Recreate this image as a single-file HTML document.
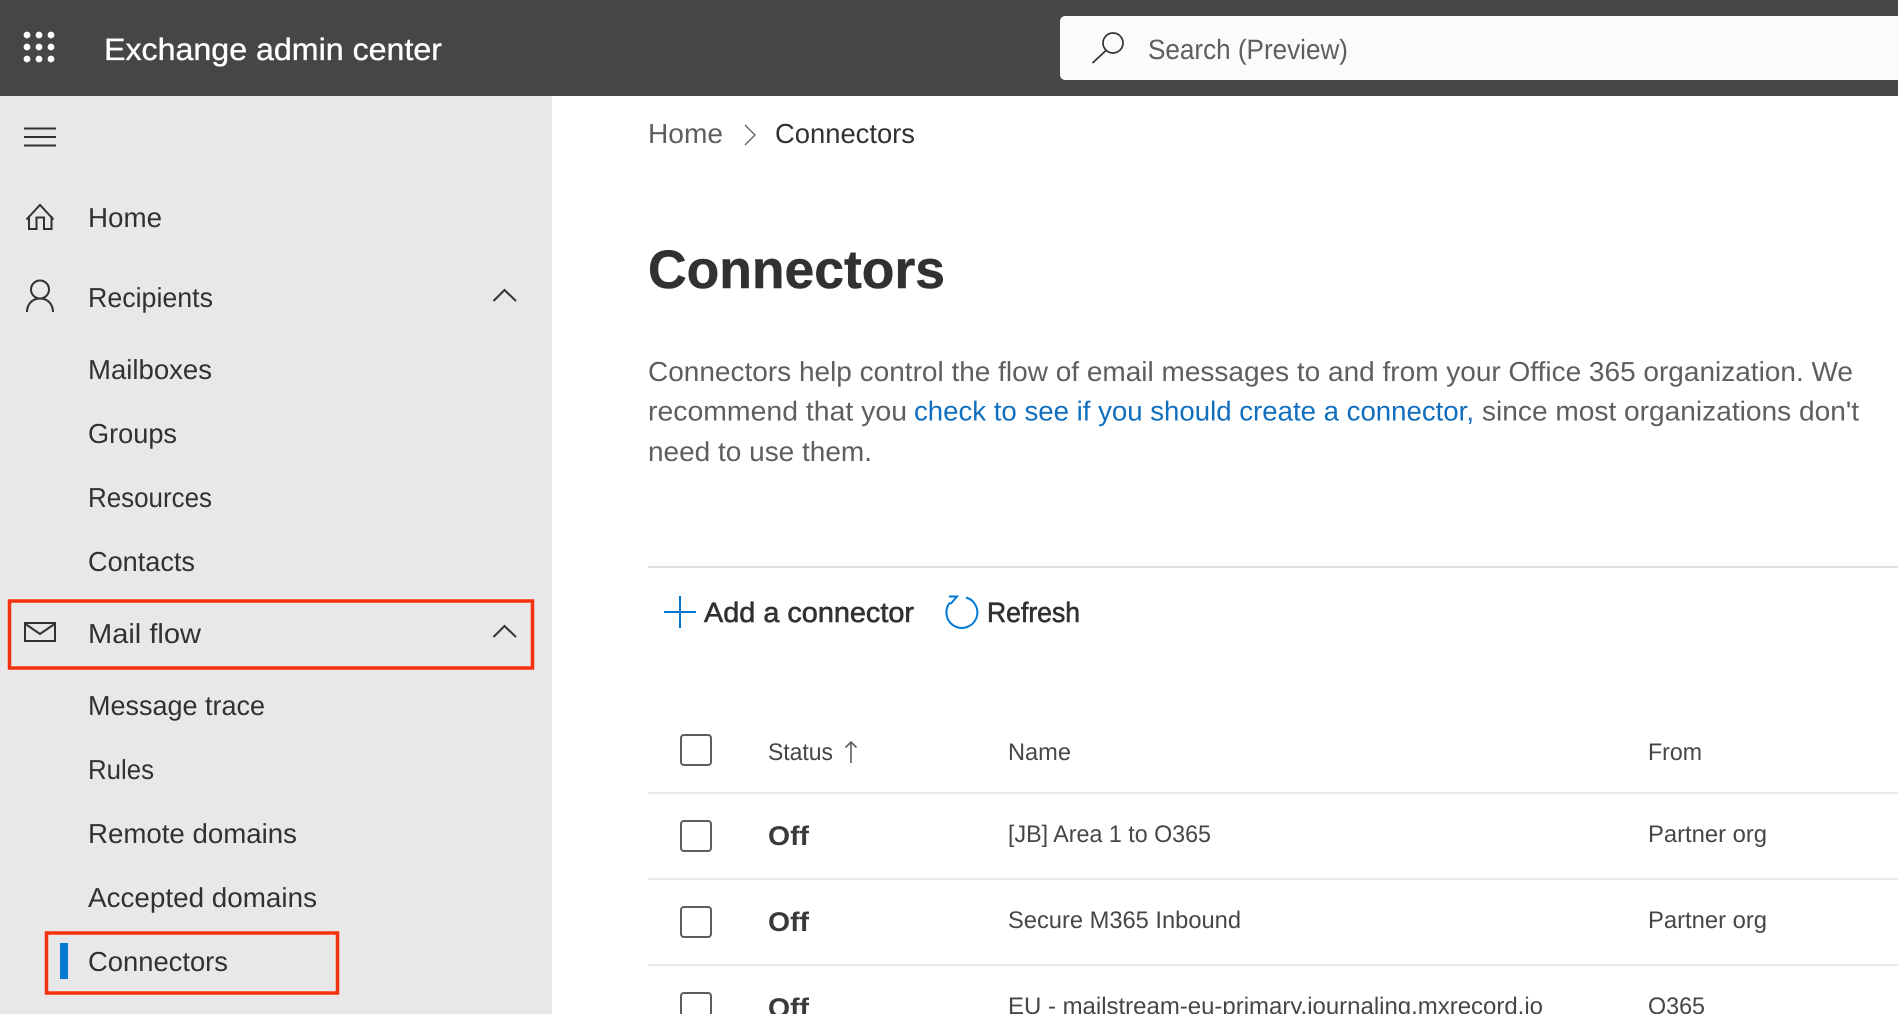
<!DOCTYPE html>
<html lang="en"><head><meta charset="utf-8"><title>Exchange admin center - Connectors</title>
<style>
html,body{margin:0;padding:0;width:1898px;height:1014px;overflow:hidden;background:#fff}
svg{display:block;font-family:"Liberation Sans",sans-serif;text-rendering:geometricPrecision}
.n{font-size:27.5px;fill:#323130}
.p{font-size:27.5px;fill:#605e5c}
.t{font-size:24px;fill:#484644}
.o{font-size:27px;font-weight:700;fill:#3b3a39}
.b{font-size:28px;fill:#323130;stroke:#323130;stroke-width:.6px}
.i{fill:none;stroke:#323130;stroke-width:2}
</style></head><body>
<svg width="1898" height="1014" viewBox="0 0 1898 1014" xmlns="http://www.w3.org/2000/svg">
<rect width="1898" height="1014" fill="#fff"/>
<rect y="96" width="552" height="918" fill="#e8e8e8"/>
<rect width="1898" height="96" fill="#484644"/>
<g fill="#fff"><circle cx="27" cy="35" r="3.400"/><circle cx="39" cy="35" r="3.400"/><circle cx="51" cy="35" r="3.400"/><circle cx="27" cy="47" r="3.400"/><circle cx="39" cy="47" r="3.400"/><circle cx="51" cy="47" r="3.400"/><circle cx="27" cy="59" r="3.400"/><circle cx="39" cy="59" r="3.400"/><circle cx="51" cy="59" r="3.400"/></g>
<text x="104" y="60" font-size="31" fill="#fff" stroke="#fff" stroke-width=".35" textLength="338" lengthAdjust="spacingAndGlyphs">Exchange admin center</text>
<path d="M1060 21a5 5 0 0 1 5-5H1898V80H1065a5 5 0 0 1-5-5Z" fill="#fbfbfb"/>
<circle cx="1113" cy="43" r="10" fill="none" stroke="#323130" stroke-width="1.700"/>
<path d="M1106 50.500L1092.500 63" fill="none" stroke="#323130" stroke-width="1.700"/>
<text x="1148" y="59" font-size="28" fill="#605e5c" textLength="200" lengthAdjust="spacingAndGlyphs">Search (Preview)</text>

<path class="i" d="M24 128.500H56M24 137H56M24 145.500H56"/>
<path class="i" d="M26.500 219.500L40 205L53.500 219.500M29 216V229H36.500V217.500H44V229H51.500V216"/>
<circle class="i" cx="40" cy="289.500" r="9"/>
<path class="i" d="M27 312C27 304 32.500 298.500 40 298.500S53 304 53 312"/>
<path class="i" d="M493.500 301L504.500 290L516 301"/>
<rect class="i" x="25" y="623" width="30" height="18"/>
<path class="i" d="M25.500 624L40 634L54.500 624"/>
<path class="i" d="M493.500 637L504.500 626L516 637"/>

<text class="n" x="88" y="227" textLength="74" lengthAdjust="spacingAndGlyphs">Home</text>
<text class="n" x="88" y="307" textLength="125" lengthAdjust="spacingAndGlyphs">Recipients</text>
<text class="n" x="88" y="379" textLength="124" lengthAdjust="spacingAndGlyphs">Mailboxes</text>
<text class="n" x="88" y="443" textLength="89" lengthAdjust="spacingAndGlyphs">Groups</text>
<text class="n" x="88" y="507" textLength="124" lengthAdjust="spacingAndGlyphs">Resources</text>
<text class="n" x="88" y="571" textLength="107" lengthAdjust="spacingAndGlyphs">Contacts</text>
<text class="n" x="88" y="643" textLength="113" lengthAdjust="spacingAndGlyphs">Mail flow</text>
<text class="n" x="88" y="715" textLength="177" lengthAdjust="spacingAndGlyphs">Message trace</text>
<text class="n" x="88" y="779" textLength="66" lengthAdjust="spacingAndGlyphs">Rules</text>
<text class="n" x="88" y="843" textLength="209" lengthAdjust="spacingAndGlyphs">Remote domains</text>
<text class="n" x="88" y="907" textLength="229" lengthAdjust="spacingAndGlyphs">Accepted domains</text>
<text class="n" x="88" y="971" textLength="140" lengthAdjust="spacingAndGlyphs">Connectors</text>

<rect x="9.500" y="601" width="523" height="67" fill="none" stroke="#f5320f" stroke-width="3.500"/>
<rect x="46.500" y="933" width="291" height="60" fill="none" stroke="#f5320f" stroke-width="3.500"/>
<rect x="60" y="943" width="8" height="36" fill="#0078d4"/>

<text class="p" x="648" y="143" textLength="75" lengthAdjust="spacingAndGlyphs">Home</text>
<path d="M745 125L755 135L745 145" fill="none" stroke="#605e5c" stroke-width="1.300"/>
<text class="n" x="775" y="143" textLength="140" lengthAdjust="spacingAndGlyphs">Connectors</text>
<text x="648" y="288" font-size="54" font-weight="700" fill="#323130" stroke="#323130" stroke-width=".5" textLength="297" lengthAdjust="spacingAndGlyphs">Connectors</text>
<text class="p" x="648" y="381" textLength="1205" lengthAdjust="spacingAndGlyphs">Connectors help control the flow of email messages to and from your Office 365 organization. We</text>
<text class="p" x="648" y="420.500" textLength="259" lengthAdjust="spacingAndGlyphs">recommend that you</text>
<text x="914" y="420.500" font-size="27.500" fill="#106ebe" textLength="560" lengthAdjust="spacingAndGlyphs">check to see if you should create a connector,</text>
<text class="p" x="1482" y="420.500" textLength="377" lengthAdjust="spacingAndGlyphs">since most organizations don't</text>
<text class="p" x="648" y="461" textLength="224" lengthAdjust="spacingAndGlyphs">need to use them.</text>
<rect x="648" y="566" width="1250" height="2" fill="#e1dfdd"/>

<path d="M664 612H696M680 596V628" fill="none" stroke="#0078d4" stroke-width="2"/>
<text class="b" x="704" y="622" textLength="210" lengthAdjust="spacingAndGlyphs">Add a connector</text>
<path d="M966 597.500A15.500 15.500 0 1 1 950 602.500" fill="none" stroke="#0078d4" stroke-width="2"/>
<path d="M949 596.500L957 596.500L950.500 604" fill="none" stroke="#0078d4" stroke-width="2"/>
<text class="b" x="987" y="622" textLength="93" lengthAdjust="spacingAndGlyphs">Refresh</text>

<rect x="681" y="735" width="30" height="30" rx="3" fill="#fff" stroke="#605e5c" stroke-width="2"/>
<text class="t" x="768" y="760" textLength="65" lengthAdjust="spacingAndGlyphs">Status</text>
<path d="M851 763V742M845.500 747.500L851 742L856.500 747.500" fill="none" stroke="#605e5c" stroke-width="1.600"/>
<text class="t" x="1008" y="760" textLength="63" lengthAdjust="spacingAndGlyphs">Name</text>
<text class="t" x="1648" y="760" textLength="54" lengthAdjust="spacingAndGlyphs">From</text>
<rect x="648" y="792" width="1250" height="2" fill="#edebe9"/>

<rect x="681" y="821" width="30" height="30" rx="3" fill="#fff" stroke="#605e5c" stroke-width="2"/>
<text class="o" x="768" y="845" textLength="41" lengthAdjust="spacingAndGlyphs">Off</text>
<text class="t" x="1008" y="842" textLength="203" lengthAdjust="spacingAndGlyphs">[JB] Area 1 to O365</text>
<text class="t" x="1648" y="842" textLength="119" lengthAdjust="spacingAndGlyphs">Partner org</text>
<rect x="648" y="878" width="1250" height="2" fill="#edebe9"/>

<rect x="681" y="907" width="30" height="30" rx="3" fill="#fff" stroke="#605e5c" stroke-width="2"/>
<text class="o" x="768" y="931" textLength="41" lengthAdjust="spacingAndGlyphs">Off</text>
<text class="t" x="1008" y="928" textLength="233" lengthAdjust="spacingAndGlyphs">Secure M365 Inbound</text>
<text class="t" x="1648" y="928" textLength="119" lengthAdjust="spacingAndGlyphs">Partner org</text>
<rect x="648" y="964" width="1250" height="2" fill="#edebe9"/>

<rect x="681" y="993" width="30" height="30" rx="3" fill="#fff" stroke="#605e5c" stroke-width="2"/>
<text class="o" x="768" y="1017" textLength="41" lengthAdjust="spacingAndGlyphs">Off</text>
<text class="t" x="1008" y="1014" textLength="535" lengthAdjust="spacingAndGlyphs">EU - mailstream-eu-primary.journaling.mxrecord.io</text>
<text class="t" x="1648" y="1014" textLength="57" lengthAdjust="spacingAndGlyphs">O365</text>
</svg>
</body></html>
